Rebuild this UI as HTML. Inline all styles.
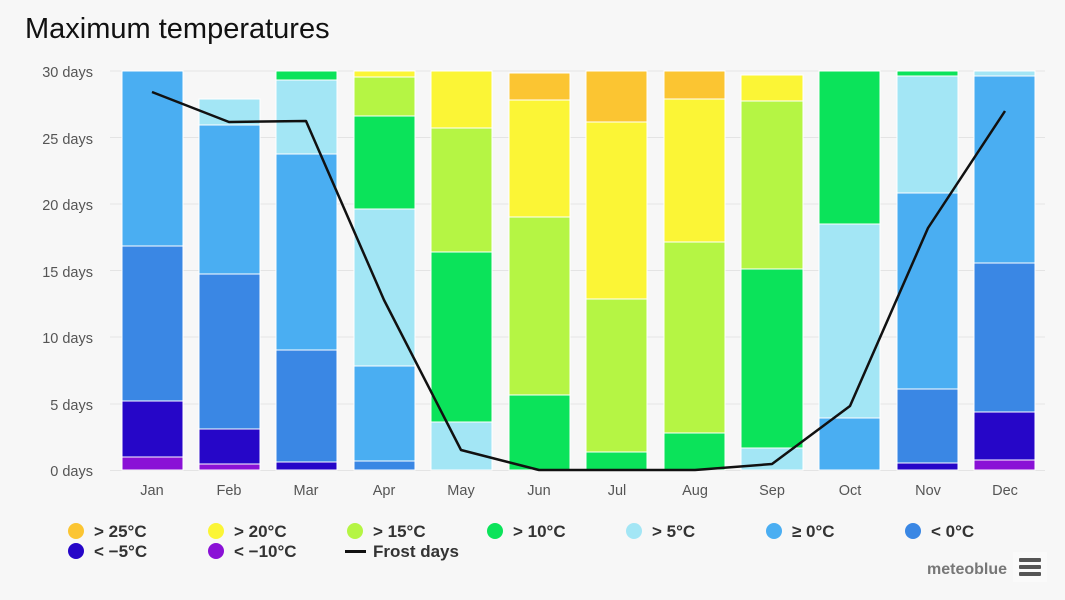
<!DOCTYPE html>
<html><head><meta charset="utf-8"><style>
html,body{margin:0;padding:0;background:#f7f7f7;width:1065px;height:600px;overflow:hidden;font-family:"Liberation Sans",sans-serif}
</style></head><body>
<svg width="1065" height="600" xmlns="http://www.w3.org/2000/svg" font-family="Liberation Sans, sans-serif">
<rect width="1065" height="600" fill="#f7f7f7"/>
<text x="25" y="38" font-size="29" fill="#111">Maximum temperatures</text>
<g stroke="#e4e4e4" stroke-width="1">
<line x1="110" x2="1045" y1="71" y2="71"/><line x1="110" x2="1045" y1="137.5" y2="137.5"/><line x1="110" x2="1045" y1="204" y2="204"/><line x1="110" x2="1045" y1="270.5" y2="270.5"/><line x1="110" x2="1045" y1="337" y2="337"/><line x1="110" x2="1045" y1="404" y2="404"/><line x1="110" x2="1045" y1="470.5" y2="470.5"/>
</g>
<g font-size="14.5" fill="#555" text-anchor="end">
<text x="93" y="77">30 days</text><text x="93" y="144">25 days</text><text x="93" y="210">20 days</text><text x="93" y="277">15 days</text><text x="93" y="343">10 days</text><text x="93" y="410">5 days</text><text x="93" y="476">0 days</text>
</g>
<g id="bars" stroke="#fff" stroke-width="1">
<rect x="122" y="457" width="61" height="13" fill="#8a11d6"/><rect x="122" y="401" width="61" height="56" fill="#2606c8"/><rect x="122" y="246" width="61" height="155" fill="#3a87e4"/><rect x="122" y="71" width="61" height="175" fill="#4aaef2"/>
<rect x="199" y="464" width="61" height="6" fill="#8a11d6"/><rect x="199" y="429" width="61" height="35" fill="#2606c8"/><rect x="199" y="274" width="61" height="155" fill="#3a87e4"/><rect x="199" y="125" width="61" height="149" fill="#4aaef2"/><rect x="199" y="99" width="61" height="26" fill="#a3e6f5"/>
<rect x="276" y="462" width="61" height="8" fill="#2606c8"/><rect x="276" y="350" width="61" height="112" fill="#3a87e4"/><rect x="276" y="154" width="61" height="196" fill="#4aaef2"/><rect x="276" y="80" width="61" height="74" fill="#a3e6f5"/><rect x="276" y="71" width="61" height="9" fill="#0be35a"/>
<rect x="354" y="461" width="61" height="9" fill="#3a87e4"/><rect x="354" y="366" width="61" height="95" fill="#4aaef2"/><rect x="354" y="209" width="61" height="157" fill="#a3e6f5"/><rect x="354" y="116" width="61" height="93" fill="#0be35a"/><rect x="354" y="77" width="61" height="39" fill="#b5f544"/><rect x="354" y="71" width="61" height="6" fill="#fbf536"/>
<rect x="431" y="422" width="61" height="48" fill="#a3e6f5"/><rect x="431" y="252" width="61" height="170" fill="#0be35a"/><rect x="431" y="128" width="61" height="124" fill="#b5f544"/><rect x="431" y="71" width="61" height="57" fill="#fbf536"/>
<rect x="509" y="395" width="61" height="75" fill="#0be35a"/><rect x="509" y="217" width="61" height="178" fill="#b5f544"/><rect x="509" y="100" width="61" height="117" fill="#fbf536"/><rect x="509" y="73" width="61" height="27" fill="#fbc532"/>
<rect x="586" y="452" width="61" height="18" fill="#0be35a"/><rect x="586" y="299" width="61" height="153" fill="#b5f544"/><rect x="586" y="122" width="61" height="177" fill="#fbf536"/><rect x="586" y="71" width="61" height="51" fill="#fbc532"/>
<rect x="664" y="433" width="61" height="37" fill="#0be35a"/><rect x="664" y="242" width="61" height="191" fill="#b5f544"/><rect x="664" y="99" width="61" height="143" fill="#fbf536"/><rect x="664" y="71" width="61" height="28" fill="#fbc532"/>
<rect x="741" y="448" width="62" height="22" fill="#a3e6f5"/><rect x="741" y="269" width="62" height="179" fill="#0be35a"/><rect x="741" y="101" width="62" height="168" fill="#b5f544"/><rect x="741" y="75" width="62" height="26" fill="#fbf536"/>
<rect x="819" y="418" width="61" height="52" fill="#4aaef2"/><rect x="819" y="224" width="61" height="194" fill="#a3e6f5"/><rect x="819" y="71" width="61" height="153" fill="#0be35a"/>
<rect x="897" y="463" width="61" height="7" fill="#2606c8"/><rect x="897" y="389" width="61" height="74" fill="#3a87e4"/><rect x="897" y="193" width="61" height="196" fill="#4aaef2"/><rect x="897" y="76" width="61" height="117" fill="#a3e6f5"/><rect x="897" y="71" width="61" height="5" fill="#0be35a"/>
<rect x="974" y="460" width="61" height="10" fill="#8a11d6"/><rect x="974" y="412" width="61" height="48" fill="#2606c8"/><rect x="974" y="263" width="61" height="149" fill="#3a87e4"/><rect x="974" y="76" width="61" height="187" fill="#4aaef2"/><rect x="974" y="71" width="61" height="5" fill="#a3e6f5"/>
</g>
<polyline points="152,92 229,122 306,121 384,300 461,450 539,470 617,470 695,470 772,464 850,406 928,228 1005,111" fill="none" stroke="#111" stroke-width="2.5" stroke-linejoin="round"/>
<g font-size="14.5" fill="#555" text-anchor="middle">
<text x="152" y="495">Jan</text><text x="229" y="495">Feb</text><text x="306" y="495">Mar</text><text x="384" y="495">Apr</text><text x="461" y="495">May</text><text x="539" y="495">Jun</text><text x="617" y="495">Jul</text><text x="695" y="495">Aug</text><text x="772" y="495">Sep</text><text x="850" y="495">Oct</text><text x="928" y="495">Nov</text><text x="1005" y="495">Dec</text>
</g>
<g font-size="17" font-weight="bold" fill="#333">
<circle cx="76" cy="531" r="8" fill="#fbc532"/><text x="94" y="537">&gt; 25°C</text>
<circle cx="216" cy="531" r="8" fill="#fbf536"/><text x="234" y="537">&gt; 20°C</text>
<circle cx="355" cy="531" r="8" fill="#b5f544"/><text x="373" y="537">&gt; 15°C</text>
<circle cx="495" cy="531" r="8" fill="#0be35a"/><text x="513" y="537">&gt; 10°C</text>
<circle cx="634" cy="531" r="8" fill="#a3e6f5"/><text x="652" y="537">&gt; 5°C</text>
<circle cx="774" cy="531" r="8" fill="#4aaef2"/><text x="792" y="537">≥ 0°C</text>
<circle cx="913" cy="531" r="8" fill="#3a87e4"/><text x="931" y="537">&lt; 0°C</text>
<circle cx="76" cy="551" r="8" fill="#2606c8"/><text x="94" y="557">&lt; −5°C</text>
<circle cx="216" cy="551" r="8" fill="#8a11d6"/><text x="234" y="557">&lt; −10°C</text>
<rect x="345" y="550" width="21" height="3" fill="#111"/><text x="373" y="557">Frost days</text>
</g>
<text x="927" y="574" font-size="16" font-weight="bold" fill="#777">meteoblue</text>
<rect x="1013" y="552" width="34" height="30" fill="#fafafa"/>
<g fill="#555"><rect x="1019" y="558" width="22" height="4" rx="1"/><rect x="1019" y="565" width="22" height="4" rx="1"/><rect x="1019" y="572" width="22" height="4" rx="1"/></g>
</svg>
</body></html>
